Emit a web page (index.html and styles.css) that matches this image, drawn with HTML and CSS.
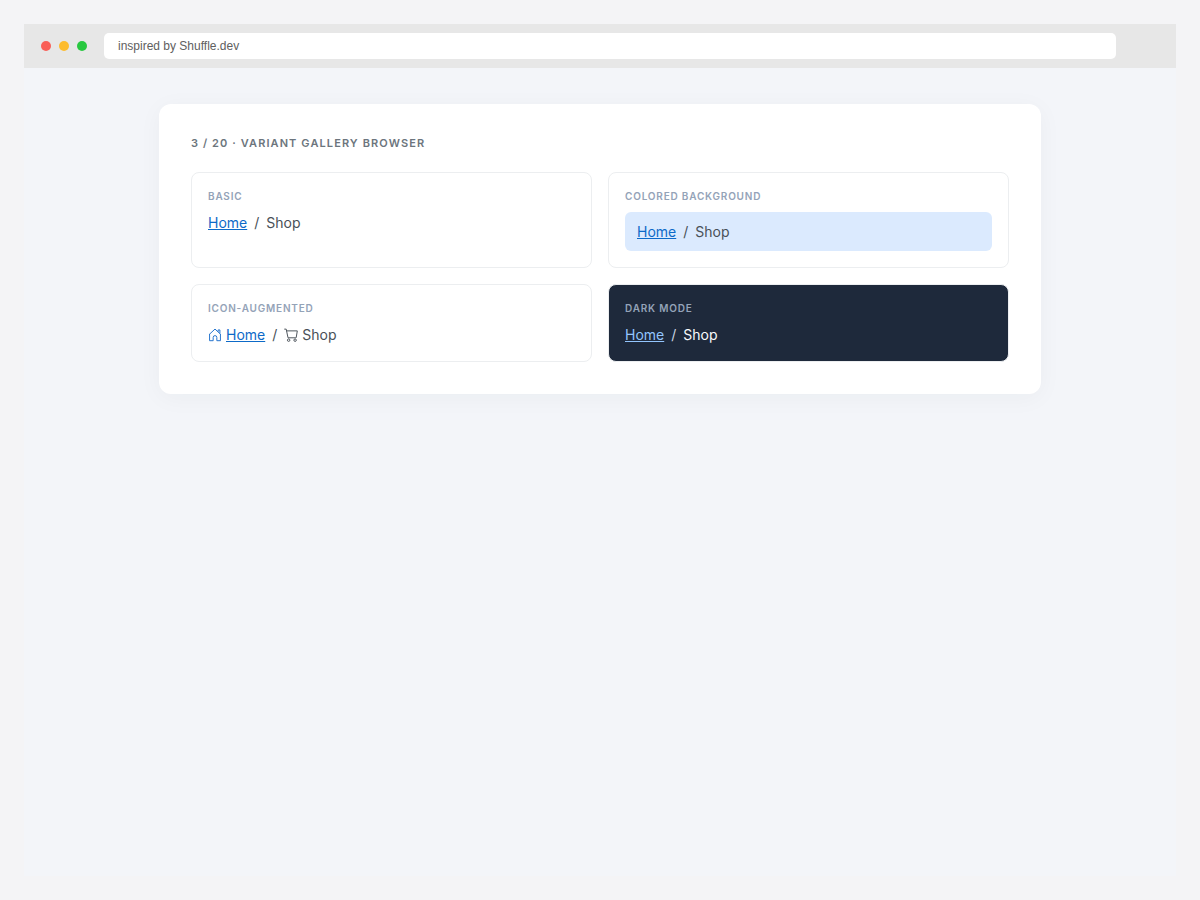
FILE: index.html
```html
<!DOCTYPE html>
<html lang="en">
<head>
  <meta charset="UTF-8">
  <meta name="viewport" content="width=device-width, initial-scale=1.0">
  <title>Variant Gallery Browser</title>
  <link rel="stylesheet" href="styles.css">
</head>
<body>
  <div class="browser">
    <!-- Browser bar -->
    <header class="browser-bar">
      <span class="dot red"></span>
      <span class="dot yellow"></span>
      <span class="dot green"></span>
      <input class="address" type="text" value="inspired by Shuffle.dev" aria-label="Address">
    </header>

    <!-- Gallery -->
    <main class="gallery">
      <h1>3 / 20 · Variant Gallery Browser</h1>
      <div class="variants">
        <section class="variant">
          <h2>Basic</h2>
          <nav class="breadcrumb" aria-label="Basic">
            <a href="#">Home</a>
            <span class="separator">/</span>
            <span>Shop</span>
          </nav>
        </section>

        <section class="variant">
          <h2>Colored background</h2>
          <nav class="breadcrumb colored" aria-label="Colored background">
            <a href="#">Home</a>
            <span class="separator">/</span>
            <span>Shop</span>
          </nav>
        </section>

        <section class="variant">
          <h2>Icon-augmented</h2>
          <nav class="breadcrumb" aria-label="Icon-augmented">
            <span class="item">
              <svg class="icon home" viewBox="0 0 16 16" aria-hidden="true">
                <path d="M1.2 7.6 8 1.2l6.8 6.4M1.8 7v7.5h4.1v-3.7a2.1 2.1 0 0 1 4.2 0v3.7h4.1V7M11.6 4.2V2.2h2v3.9"/>
              </svg>
              <a href="#">Home</a>
            </span>
            <span class="separator">/</span>
            <span class="item">
              <svg class="icon" viewBox="0 0 16 16" aria-hidden="true">
                <path d="M.3 1.3h2.2L4.6 11.2h9M2.9 3.3h12.3l-1.3 7.9"/>
                <circle cx="5.3" cy="13.9" r="1.4"/>
                <circle cx="12.7" cy="13.9" r="1.4"/>
              </svg>
              <span>Shop</span>
            </span>
          </nav>
        </section>

        <section class="variant dark">
          <h2>Dark mode</h2>
          <nav class="breadcrumb" aria-label="Dark mode">
            <a href="#">Home</a>
            <span class="separator">/</span>
            <span>Shop</span>
          </nav>
        </section>
      </div>
    </main>
  </div>
</body>
</html>
```

FILE: styles.css
```css
* {
  box-sizing: border-box;
}

body {
  margin: 0;
  padding: 24px;
  min-height: 100vh;
  display: flex;
  background-color: #f4f4f6;
  font-family: Inter, "Liberation Sans", sans-serif;
  color: #495057;
}

.browser {
  flex: 1;
  background-color: #f3f5f9;
}

/* Browser bar */
.browser-bar {
  display: flex;
  align-items: center;
  gap: 8px;
  height: 44px;
  padding: 0 60px 0 17px;
  background-color: #e7e7e7;
}

.dot {
  width: 10px;
  height: 10px;
  border-radius: 50%;
}

.red {
  background-color: #f95f57;
}

.yellow {
  background-color: #fdbc2e;
}

.green {
  background-color: #28c840;
}

.address {
  flex: 1;
  min-width: 0;
  height: 26px;
  margin-left: 9px;
  padding: 0 14px;
  border: none;
  border-radius: 5px;
  background-color: white;
  color: #606060;
  font-family: "Liberation Sans", Arial, sans-serif;
  font-size: 12px;
}

/* Gallery */
.gallery {
  max-width: 882px;
  margin: 36px auto;
  padding: 32px;
  border-radius: 12px;
  background-color: white;
  box-shadow: 0 4px 24px rgba(30, 41, 59, 0.04);
}

.gallery h1 {
  margin: 0 0 22px;
  color: #6c757d;
  font-size: 11px;
  font-weight: 600;
  line-height: 14px;
  letter-spacing: 0.1em;
  text-transform: uppercase;
}

.variants {
  display: grid;
  grid-template-columns: 1fr 1fr;
  gap: 16px;
}

.variant {
  padding: 16px;
  border: 1px solid #eceef0;
  border-radius: 8px;
}

.variant h2 {
  margin: 0 0 8px;
  color: #94a3b8;
  font-size: 10px;
  font-weight: 600;
  line-height: 15px;
  letter-spacing: 0.08em;
  text-transform: uppercase;
}

/* Breadcrumb */
.breadcrumb {
  display: flex;
  align-items: center;
  gap: 7px;
  font-size: 14px;
  line-height: 21px;
}

.breadcrumb a {
  color: #0d6ac8;
}

.breadcrumb .item {
  display: flex;
  align-items: center;
  gap: 4px;
}

.colored {
  padding: 9px 12px;
  border-radius: 6px;
  background-color: #dbeafe;
}

.icon {
  width: 14px;
  height: 14px;
  fill: none;
  stroke: currentColor;
  stroke-width: 1.1;
}

.home {
  color: #1f70cc;
}

/* Dark mode */
.dark {
  background-color: #1e293b;
  color: #f8fafc;
}

.breadcrumb,
.dark .breadcrumb {
  min-width: 0;
}

.dark .breadcrumb a {
  color: #93c5fd;
}

.dark .separator {
  color: #cbd5e1;
}
```
